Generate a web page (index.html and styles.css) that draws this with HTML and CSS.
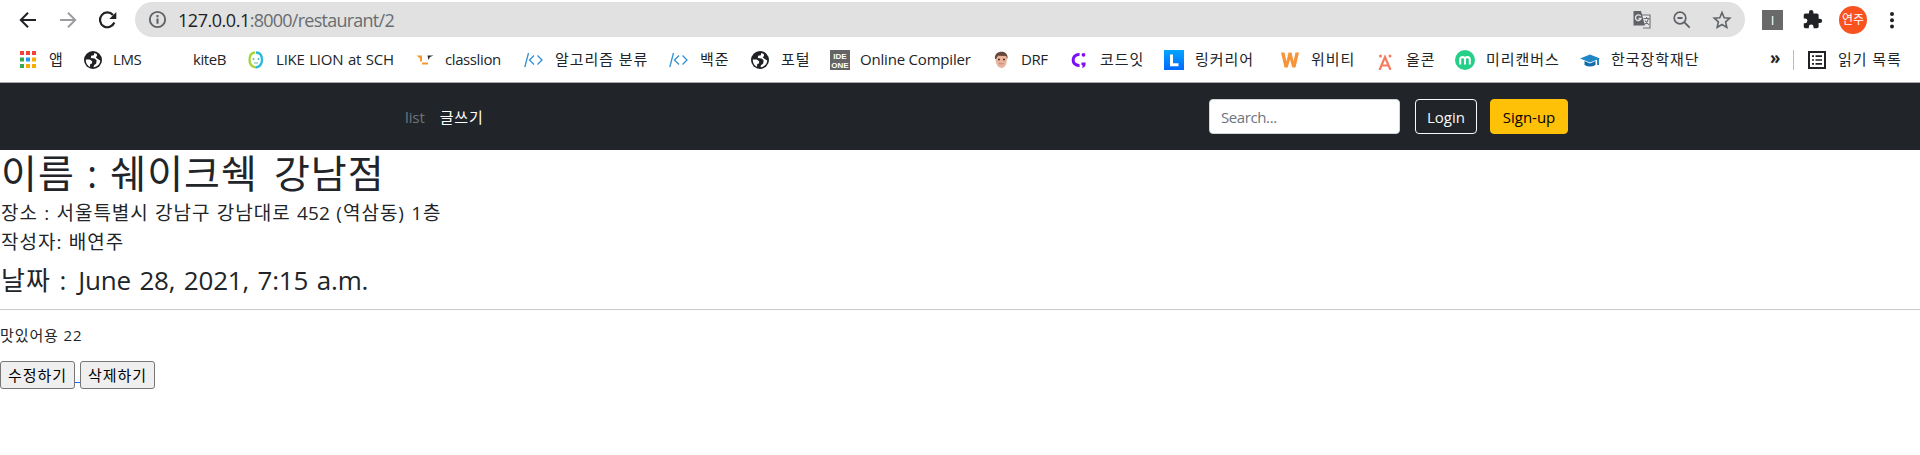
FILE: index.html
```html
<!DOCTYPE html>
<html lang="ko">
<head>
<meta charset="utf-8">
<title>restaurant</title>
<link rel="stylesheet" href="styles.css">
</head>
<body>
<svg width="0" height="0" class="defs">
  <symbol id="globe" viewBox="0 0 20 20"><circle cx="10" cy="10" r="9" fill="#202124"/><path d="M2.800 9.500 L6.800 9.600 L9.200 11.200 L9 13.600 L7.200 14 L7 17 C4.200 15.600 2.600 13 2.800 9.500Z M11.300 3 L10.800 5.200 L8.200 5.800 L7.800 8 L11.600 8.400 L13.600 10.200 L13.200 13.600 L11 15.200 L10.500 17.200 C14.500 17 17.200 14 17.200 10.600 L15.200 9.300 L12.800 7.600 L14 5.800 L13.800 3.900Z" fill="#fff"/></symbol>
  <symbol id="code" viewBox="0 0 20 20"><path d="M4.500 3 L.8 17 M10 5.500 L5.500 10 L10 14.500 M13.500 5.500 L18 10 L13.500 14.500" fill="none" stroke="#3090d0" stroke-width="1.300"/></symbol>
</svg>
<header class="browser">
  <div class="toolbar">
    <div class="controls">
      <svg viewBox="0 0 20 20"><path d="M18 10H3.500M10 2.800L2.800 10l7.200 7.200" fill="none" stroke="#202124" stroke-width="2"/></svg>
      <svg viewBox="0 0 20 20"><path d="M2 10h14.500M10 2.800l7.200 7.200L10 17.200" fill="none" stroke="#9b9da0" stroke-width="2"/></svg>
      <svg viewBox="0 0 20 20"><path d="M16.300 12.500A7.400 7.400 0 1 1 15 5" fill="none" stroke="#202124" stroke-width="2.200"/><path d="M18.300 2v7h-7z" fill="#202124"/></svg>
    </div>
    <div class="address">
      <svg class="info" viewBox="0 0 20 20"><circle cx="10" cy="10" r="7.300" fill="none" stroke="#5f6368" stroke-width="1.800"/><path d="M10 9v5M10 5.800v2" stroke="#5f6368" stroke-width="2"/></svg>
      <span class="url"><b>127.0.0.1</b>:8000/restaurant/2</span>
      <span class="actions">
        <svg viewBox="0 0 20 20"><path d="M9 5h9v13h-7" fill="#e8e8e8" stroke="#6c7074" stroke-width="1.100"/><path d="M1.500 1h7.500l4 14.500H1.500z" fill="#5f6368"/><path d="M11.500 8.500h6M14.500 7v1.500M16.500 8.500c-.5 3-2 4.500-4 6M13 10.500l4 4.500" stroke="#6c7074" stroke-width="1.100" fill="none"/><path d="M8.700 6.200A2.800 2.800 0 1 0 9 8.500H6.500" fill="none" stroke="#e1e1e1" stroke-width="1.400"/></svg>
        <svg viewBox="0 0 20 20"><circle cx="8" cy="8" r="5.800" fill="none" stroke="#5f6368" stroke-width="1.700"/><path d="M12.200 12.200l5.500 5.500M5.500 8h5" stroke="#5f6368" stroke-width="1.900"/></svg>
        <svg viewBox="0 0 20 20"><path d="M10 2.500l2.200 5.200 5.600.5-4.200 3.700 1.200 5.500-4.800-2.900-4.800 2.900 1.200-5.500L2.200 8.200l5.600-.5z" fill="none" stroke="#5f6368" stroke-width="1.600"/></svg>
      </span>
    </div>
    <div class="extensions">
      <span class="ext">I</span>
      <svg class="puzzle" viewBox="0 0 24 24"><path d="M20.500 11H19V7c0-1.100-.9-2-2-2h-4V3.500a2.500 2.500 0 0 0-5 0V5H4c-1.100 0-2 .9-2 2v3.800h1.500a2.700 2.700 0 0 1 0 5.400H2V20c0 1.100.9 2 2 2h3.800v-1.500a2.700 2.700 0 0 1 5.400 0V22H17c1.100 0 2-.9 2-2v-4h1.500a2.500 2.500 0 0 0 0-5z" fill="#202124"/></svg>
      <span class="avatar">연주</span>
      <svg class="kebab" viewBox="0 0 20 20"><g fill="#202124"><circle cx="10" cy="4" r="2"/><circle cx="10" cy="10.300" r="2"/><circle cx="10" cy="16.500" r="2"/></g></svg>
    </div>
  </div>
  <nav class="bookmarks">
    <a><svg viewBox="0 0 20 20"><path d="M2 1h4v4H2zM8 1h4v4H8zM14 1h4v4h-4z" fill="#f44336"/><path d="M2 7.500h4v4H2zM2 14h4v4H2z" fill="#34a853"/><path d="M8 7.500h4v4H8z" fill="#2196f3"/><path d="M14 7.500h4v4h-4zM14 14h4v4h-4zM8 14h4v4H8z" fill="#f9ab00"/></svg>앱</a>
    <a class="latin"><svg><use href="#globe"/></svg>LMS</a>
    <a class="latin"><svg></svg>kiteB</a>
    <a class="latin"><svg viewBox="0 0 20 20"><path d="M9 2.500C4 3 3.500 7 3.500 10s1.500 6.500 6 7.500" fill="none" stroke="#a5d43a" stroke-width="2.300"/><path d="M10 2.500c5 0 6 4 6 7.500s-2 6.800-6.500 7.500" fill="none" stroke="#28b9de" stroke-width="2.300"/><circle cx="7.500" cy="9" r="1" fill="#65bd9a"/><circle cx="12.500" cy="9" r="1" fill="#3bb8d4"/><path d="M8 13h4" stroke="#65bd9a"/></svg><span class="spaced">LIKE LION at SCH</span></a>
    <a class="latin"><svg viewBox="0 0 20 20"><path d="M1.500 5.500h5.500v6H5V8.500zM7 12.500h6v2H7z" fill="#f39a2c"/><path d="M12.500 5.500h6l-3.500 1.500-1.500 3z" fill="#292929"/></svg>classlion</a>
    <a><svg><use href="#code"/></svg>알고리즘 분류</a>
    <a><svg><use href="#code"/></svg>백준</a>
    <a><svg><use href="#globe"/></svg>포털</a>
    <a class="latin"><span class="ide"><i>IDE</i><i>ONE</i></span><span class="online">Online Compiler</span></a>
    <a class="latin"><svg viewBox="0 0 20 20"><path d="M4.500 8c0-8 11.500-8 11.500 0 0 6-2 10-5.500 10S4.500 14 4.500 8z" fill="#e9b39a"/><path d="M4 9c-1.500-9 14-10 12.500 0l-1.500-3-8-.2L5 9z" fill="#65483b"/><path d="M7 9.500h2M12 9.500h2" stroke="#4b332b" stroke-width="1.300"/><path d="M8 13.500q2.500 2 4.500 0z" fill="#fff" stroke="#b76d61" stroke-width=".6"/></svg>DRF</a>
    <a><svg viewBox="0 0 20 20"><path d="M10.500 4.500C2 4 2 16 10.500 15.500" fill="none" stroke="#7b10f5" stroke-width="3"/><circle cx="14.500" cy="4.800" r="1.900" fill="#7b10f5"/><path d="M12.500 12.500h4c.5 3-.5 5-3.500 5.500l.8-2.500-1.300-.5z" fill="#7b10f5"/></svg>코드잇</a>
    <a><svg viewBox="0 0 20 20"><defs><linearGradient id="lg" x2="0" y2="1"><stop stop-color="#00a6ff"/><stop offset="1" stop-color="#0068ff"/></linearGradient></defs><path d="M0 0h20v20H0z" fill="url(#lg)"/><path d="M7.500 4.500v10.200h7" fill="none" stroke="#fff" stroke-width="3"/></svg>링커리어</a>
    <a><svg viewBox="0 0 20 20"><path d="M1 2.500h3.500l2 9 2-9h3l2 9 2-9H19L15.500 17.500h-3.200L10 9.500l-2.300 8H4.500z" fill="#f7943a"/></svg>위비티</a>
    <a><svg viewBox="0 0 20 20"><path d="M4.500 20L10 7l5.500 13M6.500 15.500h7" fill="none" stroke="#f57b5c" stroke-width="2.200"/><circle cx="5.500" cy="6" r="1.500" fill="#f57b5c"/><circle cx="15" cy="6" r="1.500" fill="#f57b5c"/></svg>올콘</a>
    <a><svg viewBox="0 0 20 20"><circle cx="10" cy="10" r="10" fill="#25cf88"/><path d="M5.200 14.500V9.500c0-3.500 4.800-3.500 4.800 0v5M10 9.500c0-3.500 4.800-3.500 4.800 0v5" fill="none" stroke="#fff" stroke-width="2"/></svg>미리캔버스</a>
    <a><svg viewBox="0 0 20 20"><path d="M0 8.500L10 4.500l10 4-10 4z" fill="#1f87c5"/><path d="M4.500 11v4q5.500 3 11 0v-4L10 13.500z" fill="#136ba8"/><path d="M18 9v6" stroke="#1f87c5" stroke-width="2"/></svg>한국장학재단</a>
    <span class="more">»</span>
    <a class="reading"><svg viewBox="0 0 20 20"><path d="M2 2h16v16H2z" fill="none" stroke="#202124" stroke-width="2"/><path d="M5 6.200h2M5 10h2M5 13.800h2M8.500 6.200H15M8.500 10H15M8.500 13.800H15" stroke="#202124" stroke-width="1.700"/></svg>읽기 목록</a>
  </nav>
</header>
<header class="navbar">
  <nav class="links"><a class="current">list</a><a>글쓰기</a></nav>
  <form class="tools">
    <input type="text" placeholder="Search...">
    <button type="button" class="btn login">Login</button>
    <button type="button" class="btn signup">Sign-up</button>
  </form>
</header>
<main>
  <h1>이름 : 쉐이크쉑 <span>강남점</span></h1>
  <p class="meta">장소 : 서울특별시 강남구 강남대로 <b>452</b> (역삼동) 1층</p>
  <p class="meta">작성자: 배연주</p>
  <h3>날짜 : <span>June 28, 2021, 7:15 a.m.</span></h3>
  <hr>
  <p class="review">맛있어용 22</p>
  <div class="edit"><button type="button">수정하기</button><span class="gap"></span><button type="button">삭제하기</button></div>
</main>
</body>
</html>
```

FILE: styles.css
```css
* { box-sizing: border-box; }
body {
  margin: 0;
  background: #fff;
  color: #212529;
  font-family: "Open Sans", "Noto Sans CJK KR", sans-serif;
  font-size: 15px;
  overflow: hidden;
}
.defs { display: block; height: 0; }
h1, h3, p { margin: 0; font-weight: 400; white-space: nowrap; }

/* Browser toolbar */
.browser { height: 83px; border-bottom: 1px solid #a9a9ad; background: #fff; }
.toolbar { display: flex; align-items: center; height: 37px; padding-top: 2px; }
.controls { display: flex; gap: 20px; width: 135px; padding-left: 18px; }
.controls svg { width: 20px; height: 20px; flex: none; }
.address {
  display: flex; align-items: center;
  width: 1610px; height: 35px; padding: 0 13px 0 12px;
  border-radius: 18px; background: #e1e1e1;
}
.info { width: 21px; height: 21px; margin-right: 10px; }
.url { font-size: 18px; letter-spacing: -.75px; color: #6a6d70; line-height: 30px; }
.url b { font-weight: 400; color: #202124; letter-spacing: -.47px; }
.actions { display: flex; gap: 20px; margin-left: auto; }
.actions svg { width: 20px; height: 20px; }
.extensions { display: flex; align-items: center; padding-left: 17px; }
.ext {
  width: 21px; height: 20px; background: #696969; color: #fff;
  font-size: 13px; line-height: 20px; text-align: center;
}
.puzzle { width: 21px; height: 21px; margin: 0 16px 0 19px; }
.avatar {
  width: 28px; height: 28px; border-radius: 50%; background: #f8531e;
  color: #fff; font-size: 12px; line-height: 27px; text-align: center;
}
.kebab { width: 20px; height: 20px; margin-left: 15px; }

/* Bookmarks */
.bookmarks {
  display: grid;
  grid-template-columns: 65px 80px 83px 169px 109px 145px 81px 80px 161px 78px 95px 116px 95px 80px 125px 190px 23px 1fr;
  align-items: center;
  height: 45px; padding-left: 18px;
  font-size: 15px;
}
.bookmarks a {
  display: flex; align-items: flex-start; gap: 11px;
  height: 20px; line-height: 18px; white-space: nowrap; letter-spacing: .95px;
}
.bookmarks .latin { gap: 10px; letter-spacing: -.4px; line-height: 19px; }
.bookmarks .spaced { letter-spacing: -.2px; word-spacing: .8px; }
.bookmarks .online { letter-spacing: -.2px; }
.bookmarks svg { width: 20px; height: 20px; flex: none; }
.ide {
  display: flex; flex-direction: column; align-items: center; justify-content: flex-end; gap: 0;
  width: 20px; height: 20px; background: #656565; color: #fff;
  font-size: 8px; font-family: "Liberation Sans", sans-serif; font-weight: 700; line-height: 9px; letter-spacing: 0;
}
.ide i { font-style: normal; }
.more { font-size: 17px; font-weight: 700; line-height: 18px; margin-top: -3px; }
.bookmarks .reading { height: 20px; padding-left: 13px; border-left: 1px solid #bbb; }

/* Site navigation */
.navbar {
  display: flex; justify-content: space-between; align-items: center;
  height: 67px; padding: 0 352px 0 405px; background: #212529;
}
.links { display: flex; gap: 15px; color: #fff; line-height: 22px; letter-spacing: .9px; }
.links .current { color: #6c757d; letter-spacing: -.1px; }
.tools { display: flex; align-items: center; }
.tools input {
  width: 191px; height: 35px; margin-right: 15px; padding: 0 11px;
  border: 1px solid #ced4da; border-radius: 4px;
  font: 15px "Open Sans", sans-serif; letter-spacing: -.4px;
}
.tools input::placeholder { color: #6c757d; }
.btn {
  height: 35px; padding: 0; border-radius: 4px;
  font: 15px "Open Sans", sans-serif;
}
.login { width: 62px; margin-right: 13px; border: 1px solid #f8f9fa; background: transparent; color: #f8f9fa; }
.signup { width: 78px; border: 1px solid #ffc107; background: #ffc107; color: #000; }

/* Review */
h1 { padding-left: 1px; font-size: 39px; line-height: 46px; letter-spacing: 1px; word-spacing: 1px; height: 49px; }
h1 span { margin-left: 4px; }
.meta { padding-left: 1px; font-size: 19px; line-height: 29px; letter-spacing: 1px; word-spacing: .3px; }
.meta b { font-weight: 500; letter-spacing: .2px; }
h3 { margin-top: 7px; padding-left: 1px; font-size: 26px; line-height: 32px; letter-spacing: 1px; word-spacing: 1px; }
h3 span { letter-spacing: -.2px; word-spacing: 2px; margin-left: 2px; }
hr { margin: 13px 0 14px; border: 0; border-top: 1px solid #c8c9ca; }
.review { font-size: 15px; line-height: 22px; letter-spacing: .9px; }
.edit { display: flex; margin-top: 15px; }
.edit button {
  width: 75px; height: 28px; padding: 0;
  border: 1px solid #767676; border-radius: 3px; background: #efefef; color: #000;
  font: 15px "Noto Sans CJK KR", sans-serif; letter-spacing: .9px; line-height: 22px;
}
.gap { width: 5px; height: 22px; border-bottom: 1px solid #0d6efd; }
```
